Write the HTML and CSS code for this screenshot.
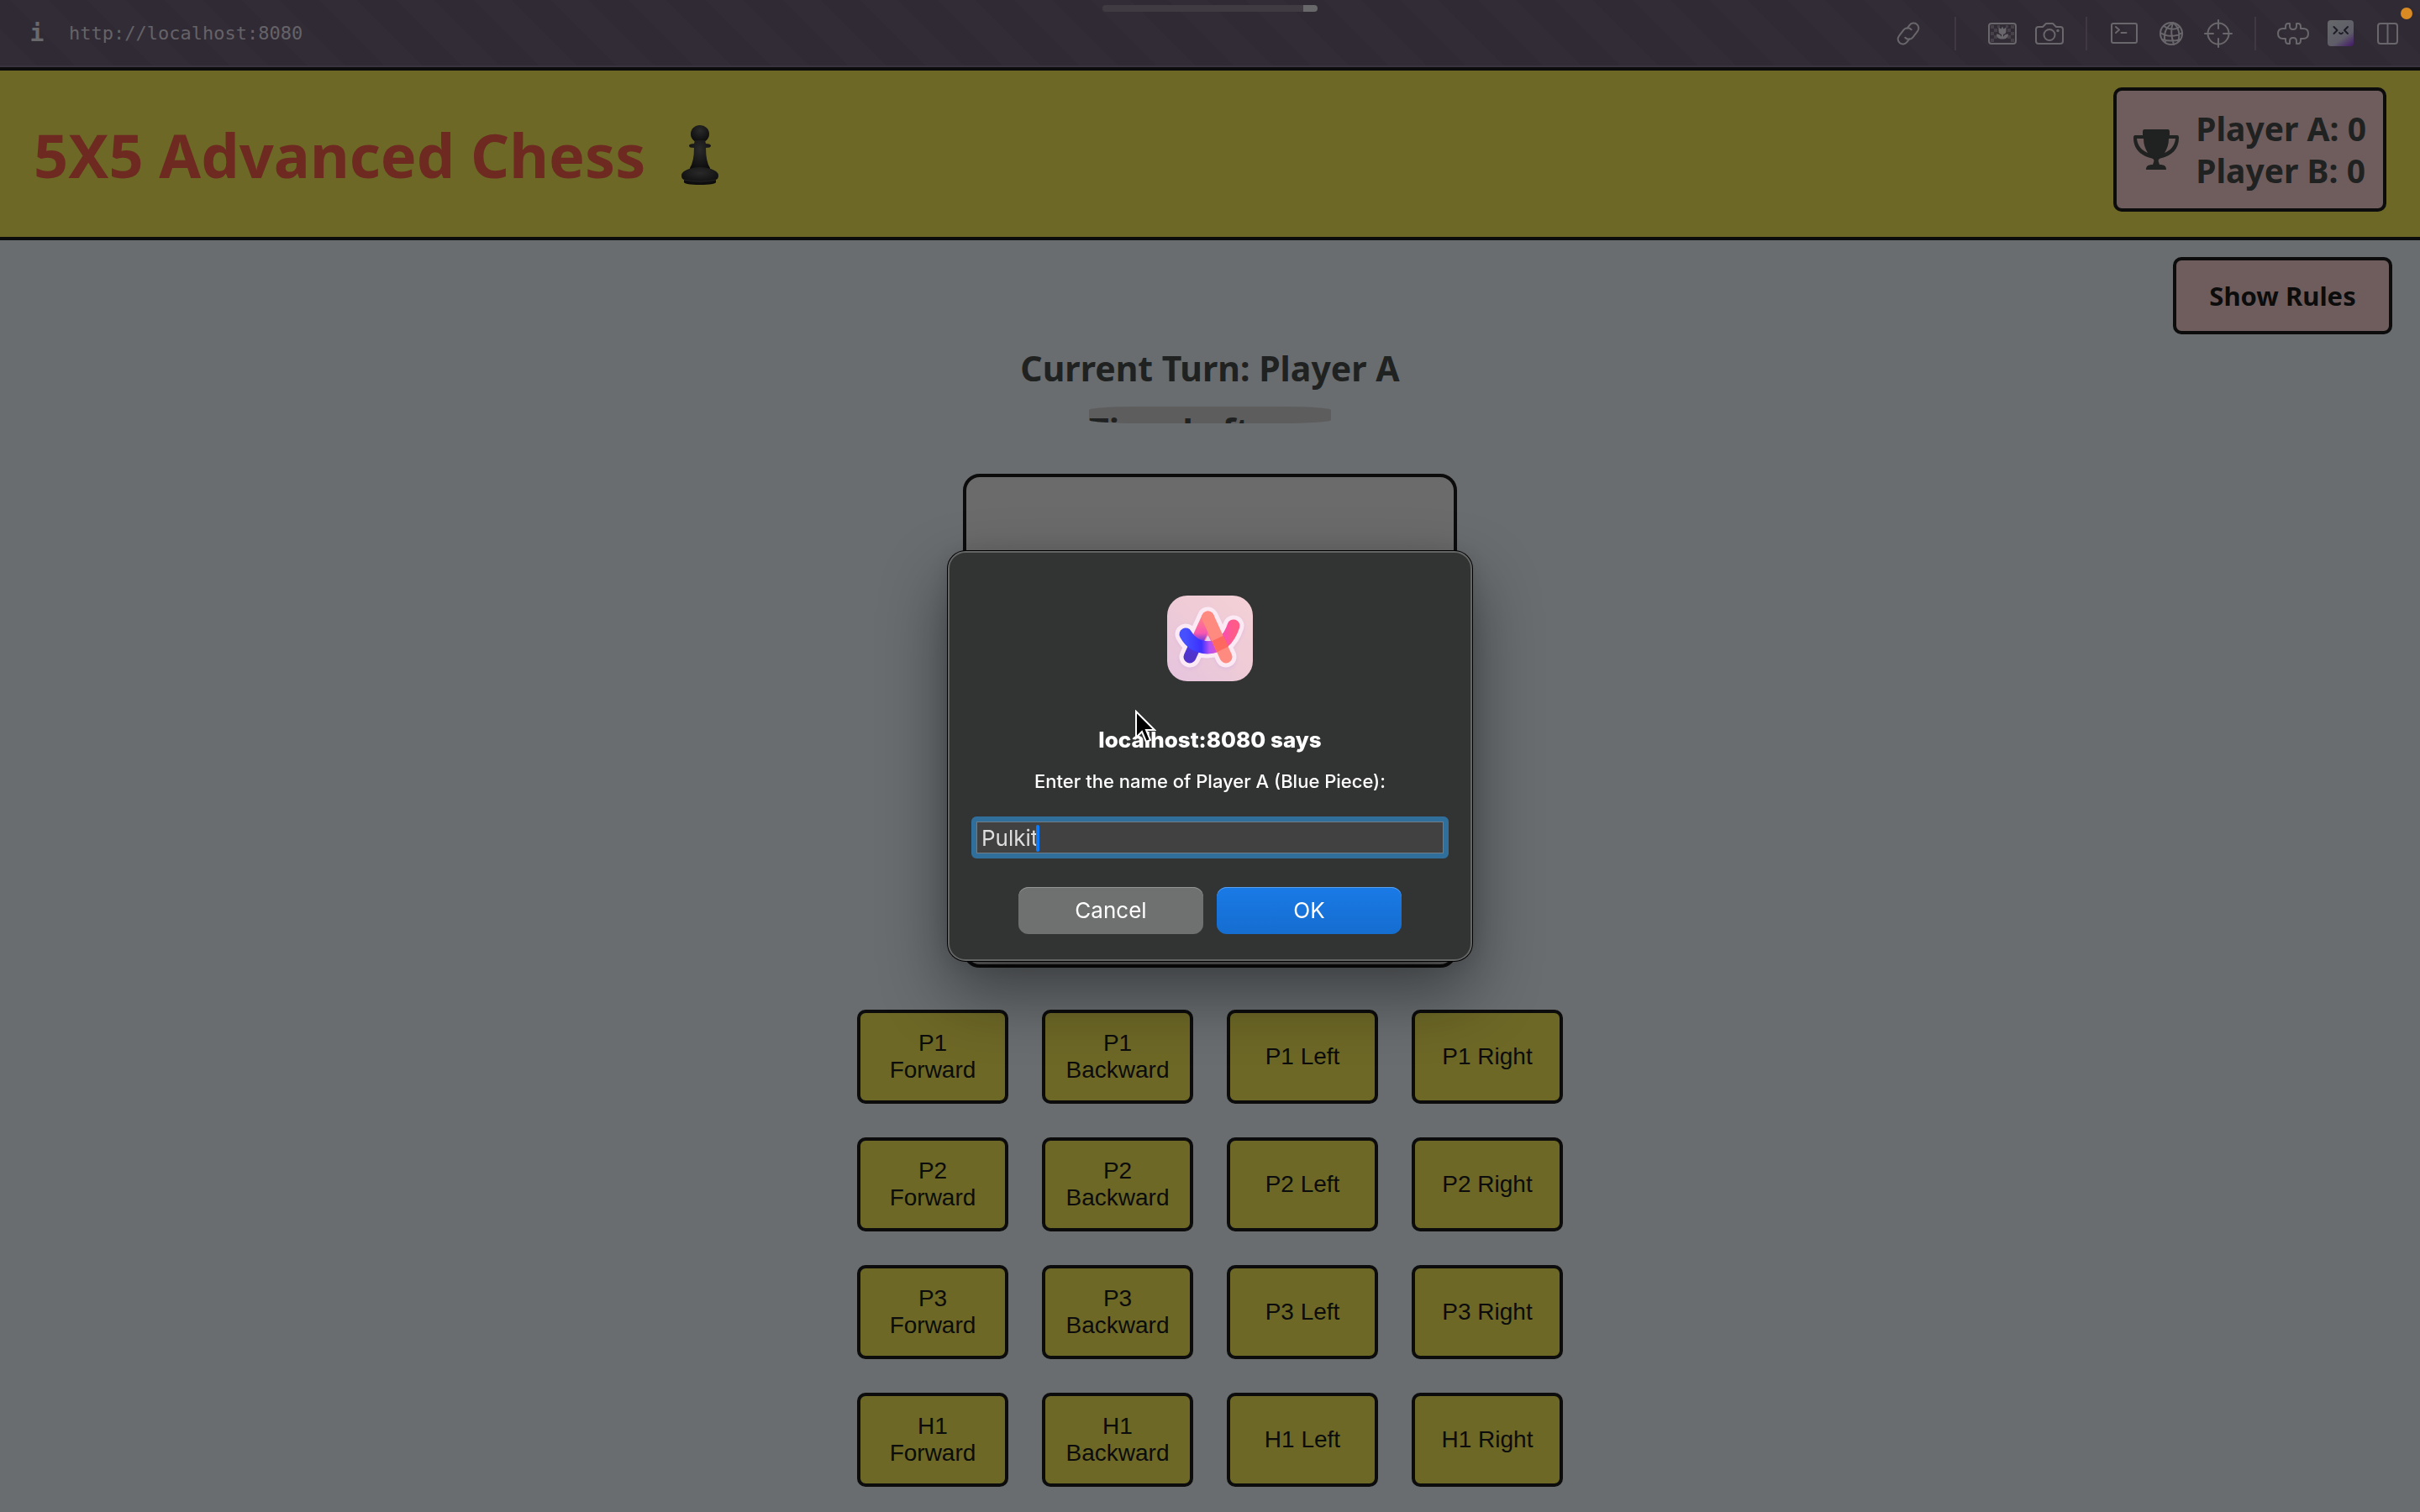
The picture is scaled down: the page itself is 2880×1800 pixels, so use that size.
FILE: index.html
```html
<!DOCTYPE html>
<html lang="en">
<head>
<meta charset="utf-8">
<title>5X5 Advanced Chess</title>
<link rel="stylesheet" href="styles.css">
</head>
<body>
<nav class="toolbar">
  <button class="info" type="button" aria-label="Site information">i</button>
  <a class="url" href="http://localhost:8080">http://localhost:8080</a>
  <span class="progress"></span>
  <div class="tools">
    <button class="tool" type="button" aria-label="Copy link"><svg viewBox="0 0 40 40"><g transform="rotate(38 20 20)"><path d="M15 16V11a6 6 0 0 1 12 0v9a6 6 0 0 1-7 6"/><path d="M25 24v5a6 6 0 0 1-12 0v-9a6 6 0 0 1 7-6"/></g></svg></button>
    <span class="divider wide"></span>
    <button class="tool" type="button" aria-label="Media"><svg viewBox="0 0 40 40"><rect x="4" y="8" width="32" height="24" rx="3"/><path class="dim" d="M6 10h4v4H6zM10 14h4v4h-4zM6 18h4v4H6zM10 22h4v4h-4zM6 26h4v4H6zM30 10h4v4h-4zM26 14h4v4h-4zM30 18h4v4h-4zM26 22h4v4h-4zM30 26h4v4h-4zM14 10h3v3h-3zM24 10h3v3h-3z"/><path class="solid" d="M15.500 12.500l3 2 1.500-3 1.500 3 3-2v4c0 3-1.500 4-3.500 4.500v3c1-2.500 3-3.500 6-3.500 0 4-2.500 6-7 6s-7-2-7-6c3 0 5 1 6 3.500v-3c-2-.5-3.500-1.500-3.500-4.500z"/></svg></button>
    <button class="tool" type="button" aria-label="Capture"><svg viewBox="0 0 40 40"><path d="M7 12h5l4-4h8l4 4h5q3 0 3 3v14q0 3-3 3H7q-3 0-3-3V15q0-3 3-3z"/><circle cx="20" cy="21.500" r="6.500"/><circle class="solid" cx="30" cy="16.500" r="1.700"/></svg></button>
    <span class="divider"></span>
    <button class="tool" type="button" aria-label="Console"><svg viewBox="0 0 40 40"><rect x="5" y="8" width="30" height="23" rx="2"/><path d="M10 12l4 3.500-4 3.500M16.500 19h6"/></svg></button>
    <button class="tool" type="button" aria-label="Network"><svg viewBox="0 0 40 40"><circle cx="20" cy="20" r="13"/><path d="M22 7C14 12 10 20 13 31M22 7c-3 8-2 17 1 26M22 7c7 5 9 14 6 23M11 11c6 4 13 5 19 1M7 19c8 5 18 5 26 0M9 27c7 2 15 2 22 0"/></svg></button>
    <button class="tool" type="button" aria-label="Inspect"><svg viewBox="0 0 40 40"><circle cx="20" cy="20" r="12.500"/><path d="M20 4v10M20 26v10M4 20h10M26 20h10"/></svg></button>
    <span class="divider"></span>
    <button class="tool" type="button" aria-label="Extensions"><svg viewBox="0 0 40 40"><path d="M11 12q0-4 3-4h2v3q0 4 4 4t4-4V8h2q3 0 3 4v2h3q6 0 6 6t-6 6h-3v2q0 4-3 4h-2v-3q0-4-4-4t-4 4v3h-2q-3 0-3-4v-2H8q-6 0-6-6t6-6h3z"/></svg></button>
    <button class="tool" type="button" aria-label="Profile"><svg viewBox="0 0 40 40"><defs><linearGradient id="face" x1=".3" y1="0" x2="1" y2="1"><stop offset="0" stop-color="#64666a"/><stop offset=".6" stop-color="#5f5d68"/><stop offset="1" stop-color="#42176a"/></linearGradient></defs><rect class="face" x="5" y="4" width="31" height="31" rx="4"/><path class="ink" d="M12.500 12l4 4-4 4M29 12l-4 4 4 4M19 19q2 2.500 4 0"/></svg></button>
    <button class="tool" type="button" aria-label="Split view"><svg viewBox="0 0 40 40"><rect x="9" y="8" width="23" height="24" rx="3"/><path d="M20.500 8v24"/></svg></button>
  </div>
  <span class="recording"></span>
</nav>

<header class="banner">
  <div class="title">
    <h1>5X5 Advanced Chess</h1>
    <svg class="pawn" viewBox="0 0 46 72"><defs><radialGradient id="pawn" cx=".5" cy=".3" r=".7"><stop offset="0" stop-color="#2a2a2a"/><stop offset="1" stop-color="#0b0b0b"/></radialGradient></defs><g fill="url(#pawn)"><ellipse cx="23" cy="11.500" rx="11" ry="10.500"/><path d="M17 19h12l1 4q6 0 6 2.500T30 28q0 16 5 24v4H11v-4q5-8 5-24-6 0-6-2.500T16 23z"/><path d="M10 53q13-4 26 0 9 3 9 8 0 4-3 5v3q-1 3-19 3T4 69v-3q-3-1-3-5 0-5 9-8z"/></g><path d="M11 54q12 4 24 0M4 66q19 4 38 0" fill="none" stroke="#222"/></svg>
  </div>
  <section class="score">
    <svg class="trophy" viewBox="0 0 54 48"><path d="M13 0h28q2 0 2 3v4h9q2 0 2 3c0 14-9 21-20 24-4 1-5 2-4 5l1 3c6 0 8 2 8 6H15c0-4 2-6 8-6l1-3c1-3 0-4-4-5C9 31 0 24 0 10Q0 7 2 7h9V3q0-3 2-3zM4 11c1 9 6 14 13 17-3-5-5-10-5-17zM42 11c0 7-2 12-5 17 7-3 12-8 13-17z"/></svg>
    <p>Player A: 0<br>Player B: 0</p>
  </section>
</header>

<main class="game">
  <button class="rules" type="button">Show Rules</button>
  <h2>Current Turn: Player A</h2>
  <div class="timer">Time Left:</div>
  <div class="board"></div>
  <div class="controls">
    <button type="button">P1 Forward</button><button type="button">P1 Backward</button><button type="button">P1 Left</button><button type="button">P1 Right</button>
    <button type="button">P2 Forward</button><button type="button">P2 Backward</button><button type="button">P2 Left</button><button type="button">P2 Right</button>
    <button type="button">P3 Forward</button><button type="button">P3 Backward</button><button type="button">P3 Left</button><button type="button">P3 Right</button>
    <button type="button">H1 Forward</button><button type="button">H1 Backward</button><button type="button">H1 Left</button><button type="button">H1 Right</button>
  </div>
</main>

<dialog class="prompt" open aria-labelledby="prompt-title">
  <svg class="app-icon" viewBox="0 0 102 102">
    <defs>
      <linearGradient id="tile" x1="0" y1="1" x2="1" y2="0"><stop offset="0" stop-color="#e5c3de"/><stop offset=".5" stop-color="#eecbd6"/><stop offset="1" stop-color="#f4d0d6"/></linearGradient>
      <linearGradient id="left-leg" x1="0" y1="0" x2="0" y2="1"><stop offset="0" stop-color="#ff7f86"/><stop offset=".4" stop-color="#f957b0"/><stop offset=".65" stop-color="#4b35e8"/><stop offset="1" stop-color="#5133c9"/></linearGradient>
      <linearGradient id="smile" x1="0" y1="0" x2="1" y2="0"><stop offset="0" stop-color="#4650ff"/><stop offset=".33" stop-color="#3c30ff"/><stop offset=".5" stop-color="#b451f2"/><stop offset=".75" stop-color="#f84eb8"/><stop offset="1" stop-color="#ff5a88"/></linearGradient>
    </defs>
    <rect width="102" height="102" rx="24" fill="url(#tile)"/>
    <g class="glow"><path d="M27 75L48.500 29 70 75M22 47Q30 61 48 62 71 61 79 38"/></g>
    <g class="halo"><path d="M27 73L48.500 26 70 73M22 46Q30 61 48 62 71 61 79 36"/></g>
    <path class="chest" d="M48.500 26L33 56h31z"/>
    <g class="strokes"><path d="M27 73L48.500 26" stroke="url(#left-leg)"/><path d="M22 46Q30 61 48 62 71 61 79 36" stroke="url(#smile)"/><path d="M48.500 26L70 73" stroke="#ff8a80"/><path class="overlap" d="M60 51l6 13"/></g>
    <path d="M48.500 47l-3.500 7h7z" fill="#e8d3ee"/>
  </svg>
  <h3 id="prompt-title">localhost:8080 says</h3>
  <label for="player-name">Enter the name of Player A (Blue Piece):</label>
  <div class="field"><input id="player-name" type="text" value="Pulkit"><span class="caret"></span></div>
  <div class="actions"><button type="button">Cancel</button><button class="primary" type="button">OK</button></div>
</dialog>
<svg class="pointer" viewBox="0 0 26 40"><path d="M2 2v31l7-7 5 12 5-2-5-12h10z"/></svg>
</body>
</html>
```
FILE: styles.css
```css
* { box-sizing: border-box; }
body {
  margin: 0;
  min-height: 100vh;
  background: #696d70;
  color: #1f2221;
  font-family: "Comic Sans MS", "Noto Sans", sans-serif;
}
button { font: inherit; color: inherit; }
h1, h2, h3, p { margin: 0; }

/* Browser toolbar */
.toolbar {
  position: relative;
  display: flex;
  align-items: center;
  height: 80px;
  padding: 0 19px 0 32px;
  background: repeating-linear-gradient(45deg, #322c37 0 32px, #302a35 32px 65px);
  box-shadow: inset 0 -2px #39323f;
  color: #69686b;
}
.info, .tool { padding: 0; border: 0; background: none; }
.info {
  width: 24px;
  margin-right: 26px;
  font: bold 28px/40px "DejaVu Sans Mono", monospace;
}
.url {
  color: #656367;
  text-decoration: none;
  font: 22px/32px "DejaVu Sans Mono", monospace;
}
.progress {
  position: absolute;
  top: 6px;
  left: 50%;
  width: 256px;
  height: 8px;
  margin-left: -128px;
  border-radius: 4px;
  background: linear-gradient(to right, #403b42 239px, #686769 239px);
}
.tools { display: flex; align-items: center; gap: 16px; margin-left: auto; }
.tool { width: 40px; height: 40px; }
.tool svg {
  display: block;
  width: 40px;
  height: 40px;
  fill: none;
  stroke: #69676b;
  stroke-width: 2;
  stroke-linecap: round;
  stroke-linejoin: round;
}
.tool .solid { fill: #69676b; stroke: none; }
.tool .dim { fill: #464149; stroke: none; }
.tool .face { fill: url(#face); stroke: none; }
.tool .ink { stroke: #1c1d26; }
.divider { width: 2px; height: 40px; margin: 0 7px; background: #403941; }
.divider.wide { margin: 0 19px; }
.divider { flex: none; }
.tools > .divider:not(.wide) { margin: 0 8px 0 7px; }
.recording {
  position: absolute;
  top: 9px;
  right: 9px;
  width: 14px;
  height: 14px;
  border-radius: 50%;
  background: #d98a22;
}

/* Page banner */
.banner {
  display: flex;
  align-items: flex-start;
  min-height: 206px;
  padding: 20px 40px 30px;
  border: solid #0b0c0b;
  border-width: 4px 0;
  background: #6d6826;
}
.title { display: flex; align-items: center; gap: 42px; padding-top: 32px; }
h1 { color: #6e2a21; font-size: 72px; line-height: 96px; }
.pawn { width: 46px; height: 72px; }
.score {
  display: flex;
  align-items: center;
  gap: 20px;
  height: 148px;
  margin-left: auto;
  padding: 0 20px;
  border: 4px solid #0b0c0b;
  border-radius: 10px;
  background: #6f5d5d;
  font-size: 39px;
  font-weight: bold;
  line-height: 50px;
}
.trophy { width: 54px; height: 48px; fill: #1f2221; fill-rule: evenodd; }

/* Game */
.game {
  display: flex;
  flex-direction: column;
  align-items: center;
  padding: 20px 0 28px;
}
.rules {
  align-self: flex-end;
  width: 261px;
  height: 92px;
  margin-right: 33px;
  border: 4px solid #0b0c0b;
  border-radius: 10px;
  background: #6f5d5d;
  color: #0b0c0b;
  font-size: 31px;
  font-weight: bold;
}
h2 { margin-top: 12px; font-size: 41px; line-height: 56px; }
.timer {
  width: 288px;
  height: 20px;
  margin-top: 18px;
  overflow: hidden;
  border-radius: 60px / 4px;
  background: #5d5d5d;
  font-size: 41px;
  font-weight: bold;
  line-height: 56px;
}
.board {
  width: 588px;
  height: 588px;
  margin-top: 60px;
  border: 4px solid #0b0c0b;
  border-radius: 20px;
  background: #6b6b6b;
}
.controls {
  display: grid;
  grid-template-columns: repeat(4, 180px);
  gap: 40px;
  margin-top: 50px;
}
.controls button {
  height: 112px;
  padding: 0 20px;
  border: 4px solid #0b0c0b;
  border-radius: 10px;
  background: #6d6826;
  color: #0b0c0b;
  font: 28px/32px "Liberation Sans", Arial, sans-serif;
}

/* Name prompt */
.prompt {
  position: fixed;
  inset: 0;
  display: flex;
  flex-direction: column;
  align-items: center;
  width: 624px;
  height: fit-content;
  margin: auto;
  padding: 51px 26px 30px;
  border: 2px solid #646665;
  border-radius: 21px;
  background: #323433;
  box-shadow: 0 0 0 1px #000, 0 36px 80px rgba(0, 0, 0, .45), 0 0 30px rgba(0, 0, 0, .1);
  color: #fff;
  font-family: Inter, sans-serif;
}
.app-icon { width: 102px; height: 102px; }
.app-icon g { fill: none; stroke-linecap: round; stroke-linejoin: round; }
.strokes { stroke-width: 15px; }
.overlap { stroke: #ff685f; stroke-linecap: butt; }
.chest { fill: #fb6f9c; }
.halo { stroke: #fbeaf4; stroke-width: 25px; }
.glow { stroke: #cfa5e8; stroke-width: 25px; opacity: .4; filter: blur(2px); }
.prompt h3 { margin-top: 54px; font-size: 26px; font-weight: 800; line-height: 32px; }
.prompt label { margin-top: 19px; font-size: 22px; font-weight: 500; line-height: 28px; }
.field { position: relative; width: 100%; margin-top: 28px; }
.field input {
  display: block;
  width: 100%;
  height: 50px;
  padding: 1px 6px 0;
  border: 6px solid #306f9c;
  border-radius: 6px;
  outline: 0;
  background: #404140;
  box-shadow: inset 0 0 0 1px #6e7d87;
  color: #dedede;
  font: 26px/32px Inter, sans-serif;
}
.caret {
  position: absolute;
  top: 10px;
  left: 77px;
  width: 4px;
  height: 32px;
  border-radius: 2px;
  background: #0a7aff;
}
.actions { display: flex; gap: 16px; margin-top: 34px; }
.actions button {
  width: 220px;
  height: 56px;
  padding: 0 0 2px;
  border: 0;
  border-radius: 12px;
  background: #6f7170;
  box-shadow: inset 0 1px #939594;
  font-size: 26px;
  font-weight: 400;
}
.actions .primary {
  background: linear-gradient(#1a7ae6, #156dd0);
  box-shadow: inset 0 1px #5a9fec;
}
.pointer {
  position: fixed;
  top: 845px;
  left: 1350px;
  width: 26px;
  height: 40px;
  fill: #000;
  stroke: #fff;
  stroke-width: 2;
}
```
